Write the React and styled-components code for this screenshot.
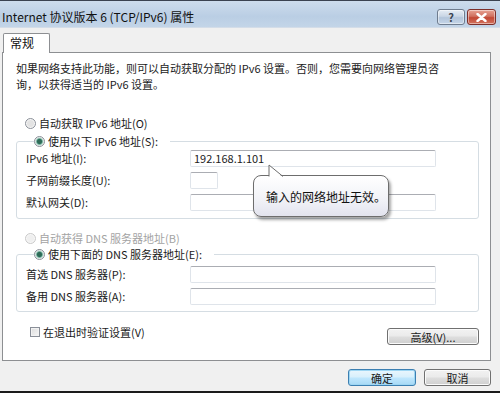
import React from "react";
import styled, { createGlobalStyle } from "styled-components";

const GlobalStyle = createGlobalStyle`
  html, body { margin: 0; padding: 0; background: #f0f0f0; }
  body { font-family: "Noto Sans CJK SC", "Liberation Sans", sans-serif; }
  * { box-sizing: border-box; }
`;

const Window = styled.div`
  width: 500px;
  height: 393px;
  display: flex;
  flex-direction: column;
  background: #f0f0f0;
  border-top: 1px solid #3b4250;
  border-bottom: 2px solid #1b1b1b;
  overflow: hidden;
`;

const TitleBar = styled.div`
  height: 27px;
  flex: none;
  display: flex;
  align-items: flex-start;
  padding: 0 4px 0 2px;
  background: linear-gradient(#cddcec, #bacee4 60%, #c3d5e8);
  border-bottom: 1px solid #d4dde8;
`;

const Title = styled.div`
  flex: 1;
  margin-top: 8px;
  font-size: 12px;
  line-height: 16px;
  color: #111;
  white-space: nowrap;
`;

const CaptionGroup = styled.div`
  display: flex;
  gap: 2px;
  margin-top: 8px;
`;

const CaptionButton = styled.div`
  width: ${(p) => p.$w}px;
  height: 16px;
  border: 1px solid ${(p) => (p.$close ? "#7d2f2a" : "#6f7c8e")};
  border-radius: 3px;
  display: flex;
  align-items: center;
  justify-content: center;
  font-size: 11px;
  font-weight: bold;
  line-height: 1;
  color: ${(p) => (p.$close ? "#fff" : "#3a4350")};
  background: ${(p) =>
    p.$close
      ? "linear-gradient(#e8a394, #d0705f 45%, #c24734 55%, #d2735f)"
      : "linear-gradient(#e6edf5, #c9d6e5 45%, #b3c5db 55%, #c6d6e8)"};
  box-shadow: inset 0 0 0 1px rgba(255, 255, 255, 0.45);
`;

const Client = styled.div`
  flex: 1;
  display: flex;
  flex-direction: column;
  padding: 5px 9px 0 2px;
`;

const TabStrip = styled.div`
  display: flex;
  height: 20px;
  padding-left: 1px;
  position: relative;
  z-index: 1;
`;

const Tab = styled.div`
  width: 47px;
  height: 20px;
  background: #fff;
  border: 1px solid #8d8f92;
  border-bottom: none;
  border-radius: 2px 2px 0 0;
  font-size: 12px;
  line-height: 18px;
  padding-left: 6px;
  color: #111;
`;

const Panel = styled.div`
  position: relative;
  height: 309px;
  margin-top: -1px;
  background: #fff;
  border: 1px solid #8d8f92;
  padding: 7px 0 0 13px;
  display: flex;
  flex-direction: column;
  font-size: 11px;
  color: #1a1a1a;
`;

const DescLine = styled.div`
  line-height: 16px;
  height: 16px;
  white-space: nowrap;
`;

const RadioRow = styled.label`
  display: flex;
  align-items: center;
  height: 16px;
  gap: 3px;
  padding-left: 9px;
  margin-top: ${(p) => p.$mt || 0}px;
  color: ${(p) => (p.$disabled ? "#a3a3a3" : "#1a1a1a")};
  line-height: 16px;
  white-space: nowrap;
`;

const RadioDot = styled.span`
  width: 11px;
  height: 11px;
  border-radius: 50%;
  flex: none;
  border: 1px solid ${(p) => (p.$disabled ? "#c9c9c9" : "#8a8f98")};
  background: ${(p) =>
    p.$checked
      ? "radial-gradient(circle, #2f6a57 0 2px, #3c8a74 2.5px, #bcd9cf 3.5px, #f4f4f4 4.5px)"
      : p.$disabled
      ? "radial-gradient(circle, #efefef 0 3px, #f7f7f7 4px)"
      : "radial-gradient(circle, #e3e3e3 0 3px, #f5f5f5 4px)"};
`;

const Group = styled.fieldset`
  margin: ${(p) => p.$mt || 0}px 11px 0 0;
  padding: ${(p) => p.$pt}px 41px ${(p) => p.$pb}px 9px;
  border: 1px solid #d5dde3;
  border-radius: 3px;
  display: grid;
  grid-template-columns: 164px 246px;
  row-gap: 5px;
  align-items: center;
`;

const Legend = styled.legend`
  padding: 0 12px 0 0;
  margin-left: 8px;
  & > label { padding-left: 0; }
`;

const FieldLabel = styled.span`
  line-height: 17px;
  white-space: nowrap;
`;

const Input = styled.div`
  width: ${(p) => (p.$short ? "28px" : "246px")};
  height: 17px;
  border: 1px solid #dfe4ea;
  border-top-color: #abadb3;
  border-radius: 2px;
  background: #fff;
  padding-left: 3px;
  font-size: 11px;
  line-height: 15px;
  color: #222;
`;

const BottomRow = styled.div`
  display: flex;
  justify-content: space-between;
  align-items: flex-start;
  margin: 12px 11px 0 0;
`;

const CheckRow = styled.label`
  display: flex;
  align-items: center;
  height: 16px;
  gap: 3px;
  padding-left: 14px;
  white-space: nowrap;
`;

const CheckBox = styled.span`
  width: 10px;
  height: 10px;
  flex: none;
  border: 1px solid #8a8f98;
  background: linear-gradient(135deg, #dcdcdc, #f7f7f7);
  box-shadow: inset 0 0 0 1px #f2f2f2;
`;

const Button = styled.div`
  width: ${(p) => p.$w}px;
  height: ${(p) => p.$h || 17}px;
  margin-top: ${(p) => p.$mt || 0}px;
  border: 1px solid ${(p) => (p.$default ? "#3c7fb1" : "#707070")};
  border-radius: 3px;
  display: flex;
  align-items: center;
  justify-content: center;
  font-size: 11px;
  color: #1a1a1a;
  background: ${(p) =>
    p.$default
      ? "linear-gradient(#eaf6fd, #d9f0fc 45%, #bee6fd 55%, #a7d9f5)"
      : "linear-gradient(#f2f2f2, #ebebeb 45%, #dddddd 55%, #cfcfcf)"};
  box-shadow: inset 0 0 0 1px ${(p) => (p.$default ? "#9ed6f3" : "#fbfbfb")};
`;

const Footer = styled.div`
  display: flex;
  justify-content: flex-end;
  gap: 8px;
  padding-top: 8px;
`;

const Balloon = styled.div`
  position: absolute;
  left: 250px;
  top: 122px;
  width: 136px;
  height: 42px;
  border: 1px solid #6d6d6d;
  border-radius: 8px;
  background: linear-gradient(#ffffff, #f1f2f7 60%, #e2e3ee);
  box-shadow: 2px 3px 3px rgba(0, 0, 0, 0.35);
  display: flex;
  align-items: center;
  padding-left: 12px;
  font-size: 12px;
  color: #111;
  white-space: nowrap;
`;

const Pointer = styled.svg`
  position: absolute;
  left: 14px;
  top: -12px;
  overflow: visible;
`;

export default function App() {
  return (
    <>
      <GlobalStyle />
      <Window>
        <TitleBar>
          <Title>Internet 协议版本 6 (TCP/IPv6) 属性</Title>
          <CaptionGroup>
            <CaptionButton $w={28}>?</CaptionButton>
            <CaptionButton $w={29} $close>
              <svg width="11" height="9" viewBox="0 0 11 9">
                <path d="M1.5 1 L9.5 8 M9.5 1 L1.5 8" stroke="#fff" strokeWidth="2.4" strokeLinecap="round" />
              </svg>
            </CaptionButton>
          </CaptionGroup>
        </TitleBar>
        <Client>
          <TabStrip>
            <Tab>常规</Tab>
          </TabStrip>
          <Panel>
            <DescLine>如果网络支持此功能，则可以自动获取分配的 IPv6 设置。否则，您需要向网络管理员咨</DescLine>
            <DescLine>询，以获得适当的 IPv6 设置。</DescLine>
            <RadioRow $mt={23}>
              <RadioDot />
              自动获取 IPv6 地址(O)
            </RadioRow>
            <Group $mt={2} $pt={1} $pb={7}>
              <Legend>
                <RadioRow>
                  <RadioDot $checked />
                  使用以下 IPv6 地址(S):
                </RadioRow>
              </Legend>
              <FieldLabel>IPv6 地址(I):</FieldLabel>
              <Input>192.168.1.101</Input>
              <FieldLabel>子网前缀长度(U):</FieldLabel>
              <Input $short />
              <FieldLabel>默认网关(D):</FieldLabel>
              <Input />
            </Group>
            <RadioRow $mt={11} $disabled>
              <RadioDot $disabled />
              自动获得 DNS 服务器地址(B)
            </RadioRow>
            <Group $pt={4} $pb={6}>
              <Legend>
                <RadioRow>
                  <RadioDot $checked />
                  使用下面的 DNS 服务器地址(E):
                </RadioRow>
              </Legend>
              <FieldLabel>首选 DNS 服务器(P):</FieldLabel>
              <Input />
              <FieldLabel>备用 DNS 服务器(A):</FieldLabel>
              <Input />
            </Group>
            <BottomRow>
              <CheckRow>
                <CheckBox />
                在退出时验证设置(V)
              </CheckRow>
              <Button $w={92} $mt={4}>高级(V)...</Button>
            </BottomRow>
            <Balloon>
              <Pointer width="16" height="13" viewBox="0 0 16 13">
                <path d="M1 13.5 L1 1 L15 13.5 Z" fill="#ffffff" stroke="none" />
                <path d="M1 12.5 L1 1 L15 12.5" fill="none" stroke="#6d6d6d" strokeWidth="1" />
              </Pointer>
              输入的网络地址无效。
            </Balloon>
          </Panel>
          <Footer>
            <Button $w={68} $default>确定</Button>
            <Button $w={67}>取消</Button>
          </Footer>
        </Client>
      </Window>
    </>
  );
}
